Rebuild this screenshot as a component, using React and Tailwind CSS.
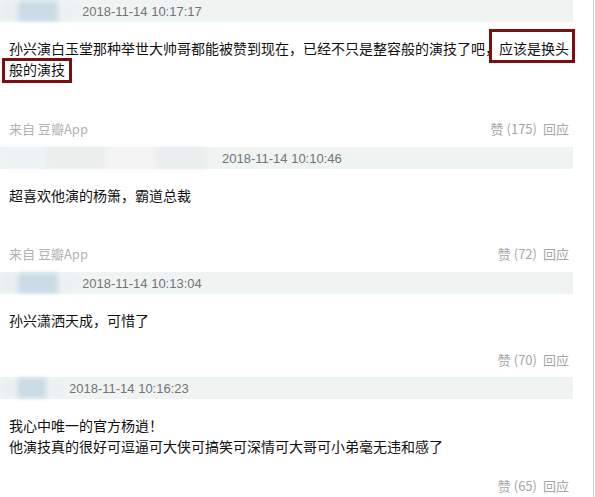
import React from "react";

const cjk = { fontFamily: '"Noto Sans CJK SC", "Liberation Sans", sans-serif' };
const dateFont = { fontFamily: '"Liberation Sans", Arial, sans-serif' };

function Bar({ blur, date }) {
  return (
    <div className="flex h-[22px] items-center bg-[#eff4f3]">
      {blur}
      <span className="text-[13px] text-[#737373] leading-none" style={dateFont}>
        {date}
      </span>
    </div>
  );
}

function BlurA({ w, blue }) {
  return (
    <div className="flex h-full shrink-0 items-center" style={{ width: w }}>
      <div className="flex h-[24px] w-full items-center blur-[2px]">
        <div className="h-[16px] w-[18px] rounded-l-full bg-[#e8eff1]" />
        <div className="h-[20px] bg-[#cadbe5]" style={{ width: blue }} />
        <div className="h-[16px] flex-1 rounded-r-full bg-[#ecf1f3]" />
      </div>
    </div>
  );
}

function BlurB() {
  return (
    <div className="flex h-full w-[222px] shrink-0 items-center pl-[6px] pr-[16px]">
      <div className="flex h-[22px] w-full blur-[2px]">
        <div className="h-full w-[40px] bg-[#edf3f4]" />
        <div className="h-full w-[60px] bg-[#eceeee]" />
        <div className="h-full w-[50px] bg-[#f3f3f3]" />
        <div className="h-full flex-1 bg-[#ebeeee]" />
      </div>
    </div>
  );
}

function Footer({ from, likes, mt }) {
  return (
    <div
      className={`flex h-[20px] items-center justify-between pl-[9px] pr-[4px] text-[13px] leading-[20px] ${mt}`}
      style={cjk}
    >
      <span className="text-[#b3b3b3]">{from ? "来自 豆瓣App" : ""}</span>
      <span className="flex gap-[6px] text-[#a6a6a6]">
        <span>赞 ({likes})</span>
        <span>回应</span>
      </span>
    </div>
  );
}

export default function App() {
  return (
    <div className="min-h-[497px] w-[595px] bg-white">
      <div className="min-h-[497px] w-[594px] border-r border-[#d4d4d4]">
        <div className="w-[573px]">
          {/* Comment 1 */}
          <div className="mb-[8px]">
            <Bar blur={<BlurA w={82} blue={40} />} date="2018-11-14 10:17:17" />
            <div
              className="relative mt-[16px] pl-[9px] text-[14px] leading-[21px] text-[#111]"
              style={cjk}
            >
              孙兴演白玉堂那种举世大帅哥都能被赞到现在，已经不只是整容般的演技了吧，应该是换头般的演技
              <div className="absolute left-[489px] top-[-9px] h-[34px] w-[86px] border-[3px] border-[#7a0f12]" />
              <div className="absolute left-[2px] top-[20px] h-[25px] w-[70px] border-[3px] border-[#7a0f12]" />
            </div>
            <Footer from likes="175" mt="mt-[39px]" />
          </div>

          {/* Comment 2 */}
          <div className="mb-[8px]">
            <Bar blur={<BlurB />} date="2018-11-14 10:10:46" />
            <div
              className="mt-[16px] pl-[9px] text-[14px] leading-[21px] text-[#111]"
              style={cjk}
            >
              超喜欢他演的杨箫，霸道总裁
            </div>
            <Footer from likes="72" mt="mt-[38px]" />
          </div>

          {/* Comment 3 */}
          <div className="mb-[7px]">
            <Bar blur={<BlurA w={82} blue={40} />} date="2018-11-14 10:13:04" />
            <div
              className="mt-[16px] pl-[9px] text-[14px] leading-[21px] text-[#111]"
              style={cjk}
            >
              孙兴潇洒天成，可惜了
            </div>
            <Footer likes="70" mt="mt-[19px]" />
          </div>

          {/* Comment 4 */}
          <div>
            <Bar blur={<BlurA w={69} blue={28} />} date="2018-11-14 10:16:23" />
            <div
              className="mt-[16px] pl-[9px] text-[14px] leading-[21px] text-[#111]"
              style={cjk}
            >
              <div>我心中唯一的官方杨逍！</div>
              <div>他演技真的很好可逗逼可大侠可搞笑可深情可大哥可小弟毫无违和感了</div>
            </div>
            <Footer likes="65" mt="mt-[19px]" />
          </div>
        </div>
      </div>
    </div>
  );
}
